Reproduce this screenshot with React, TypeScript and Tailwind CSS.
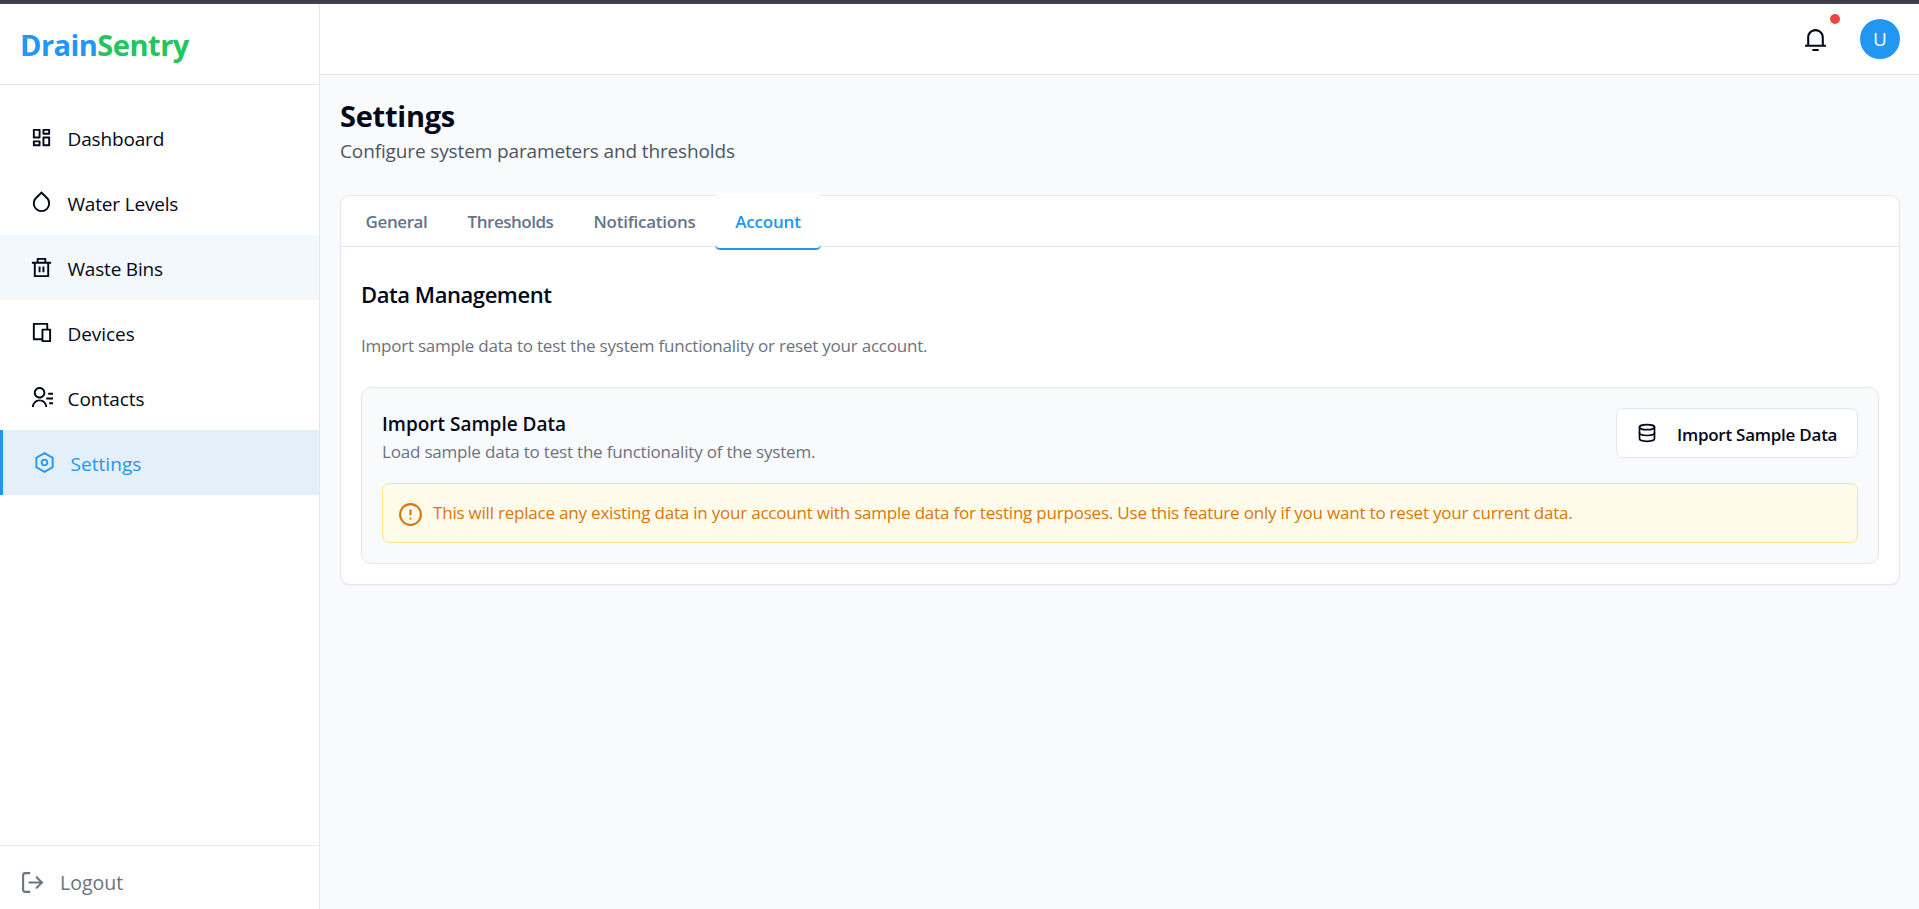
import type { ComponentType } from "react";
import { CircleAlert, Database, LogOut } from "lucide-react";
import {
  RiContactsLine,
  RiDashboardLine,
  RiDeleteBinLine,
  RiDeviceLine,
  RiDropLine,
  RiNotification3Line,
  RiSettingsLine,
} from "react-icons/ri";

type NavItem = {
  label: string;
  icon: ComponentType<{ className?: string }>;
  tracking: string;
  state?: "hover" | "active";
};

const navItems: NavItem[] = [
  { label: "Dashboard", icon: RiDashboardLine, tracking: "tracking-[-0.15px]" },
  { label: "Water Levels", icon: RiDropLine, tracking: "tracking-[-0.18px]" },
  { label: "Waste Bins", icon: RiDeleteBinLine, tracking: "tracking-[-0.2px]", state: "hover" },
  { label: "Devices", icon: RiDeviceLine, tracking: "tracking-[-0.05px]" },
  { label: "Contacts", icon: RiContactsLine, tracking: "tracking-[-0.036px]" },
  { label: "Settings", icon: RiSettingsLine, tracking: "tracking-[0.05px]", state: "active" },
];

const tabs = [
  { label: "General", style: "w-[101px] tracking-[-0.404px]" },
  { label: "Thresholds", style: "w-[126px] pl-px tracking-[-0.48px]" },
  { label: "Notifications", style: "w-[142px] pl-px tracking-[-0.249px]" },
  { label: "Account", style: "w-[106px] pt-0.5 tracking-[-0.2px]", active: true },
];

function NavLink({ label, icon: Icon, tracking, state }: NavItem) {
  const look =
    state === "active"
      ? "border-l-[3px] border-[#2196f3] bg-[#e3f0f9] text-[#2196f3]"
      : state === "hover"
        ? "bg-[#f2f8fc]"
        : "";
  return (
    <a href="#" className={`flex h-[65px] items-center gap-[14.5px] pl-[30px] ${look}`}>
      <Icon className="size-[23px]" />
      <span className={`pt-0.5 text-[19px] leading-[30px] ${tracking}`}>{label}</span>
    </a>
  );
}

function Sidebar() {
  return (
    <aside className="flex w-80 shrink-0 flex-col border-r border-[#e5e7eb] bg-white">
      <div className="flex h-[81px] items-center border-b border-[#e5e7eb] pl-5 text-[29px] font-bold">
        <h1 className="pt-0.5">
          <span className="tracking-[-0.55px] text-[#2196f3]">Drain</span>
          <span className="tracking-[-0.485px] text-[#22c55e]">Sentry</span>
        </h1>
      </div>
      <nav className="flex-1 pt-5">
        {navItems.map((item) => (
          <NavLink key={item.label} {...item} />
        ))}
      </nav>
      <div className="h-16 border-t border-[#e5e7eb] pt-5">
        <button className="flex items-center gap-[15px] pl-5 text-[19.5px] leading-[30px] text-[#6b7280]">
          <LogOut className="size-[25px]" />
          <span className="pt-0.5">Logout</span>
        </button>
      </div>
    </aside>
  );
}

function Header() {
  return (
    <header className="flex h-[71px] shrink-0 items-center justify-end border-b border-[#e5e7eb] bg-white pr-[19px]">
      <button className="relative mr-[32.5px]">
        <RiNotification3Line className="size-[25px]" />
        <span className="absolute -top-[13px] left-[27.5px] size-2.5 rounded-full bg-[#ef4444]" />
      </button>
      <div className="flex size-10 items-center justify-center rounded-full bg-[#2196f3] pt-px text-[19px] text-white">
        U
      </div>
    </header>
  );
}

function TabBar() {
  return (
    <div className="flex h-[51px] items-start border-b border-[#e2e8f0] pl-[5px]">
      {tabs.map(({ label, style, active }) => (
        <button
          key={label}
          className={`-mt-[3px] flex h-[57px] items-center justify-center rounded-[5px] text-[17px] font-semibold ${style} ${
            active ? "border-b-2 border-[#2196f3] bg-white text-[#2196f3]" : "text-[#64748b]"
          }`}
        >
          {label}
        </button>
      ))}
    </div>
  );
}

function ImportPanel() {
  return (
    <section className="rounded-[10px] border border-[#e5e7eb] bg-[#f9fafb] p-5">
      <div className="flex items-start justify-between">
        <div className="pt-px">
          <h4 className="text-[19px] leading-[30px] font-semibold">Import Sample Data</h4>
          <p className="-mb-px text-[17px] leading-[25px] tracking-[-0.197px] text-[#6b7280]">
            Load sample data to test the functionality of the system.
          </p>
        </div>
        <button className="flex h-[50px] w-[242px] items-center gap-5 rounded-[7px] border border-[#e2e8f0] bg-white pl-5">
          <Database className="size-5" />
          <span className="pt-0.5 text-[17px] leading-[25px] font-semibold tracking-[-0.25px]">
            Import Sample Data
          </span>
        </button>
      </div>
      <div className="mt-5 flex h-[60px] items-center gap-2.5 rounded-[7px] border border-[#fde68a] bg-[#fffbeb] pl-[15px] text-[#d97706]">
        <CircleAlert className="mt-[3px] size-[25px]" />
        <p className="pb-0.5 text-[17px] leading-[25px] tracking-[-0.207px]">
          This will replace any existing data in your account with sample data for testing purposes. Use this feature
          only if you want to reset your current data.
        </p>
      </div>
    </section>
  );
}

export default function App() {
  return (
    <div className="flex h-[909px] flex-col overflow-hidden font-['Open_Sans','Noto_Sans',sans-serif] text-[#020817]">
      <div className="h-1 shrink-0 border-b-2 border-[#46444b] bg-[#3b3d49]" />
      <div className="flex min-h-0 flex-1">
        <Sidebar />
        <div className="flex min-w-0 flex-1 flex-col">
          <Header />
          <main className="flex-1 bg-[#f9fafc] px-5 pt-[21px]">
            <div className="mb-[29px]">
              <h2 className="text-[29px] leading-10 font-bold tracking-[-0.25px]">Settings</h2>
              <p className="text-[19px] leading-[30px] tracking-[-0.13px] text-[#4b5563]">
                Configure system parameters and thresholds
              </p>
            </div>
            <div className="mr-[-1px] rounded-[10px] border border-[#e2e8f0] bg-white shadow-[0_1px_2px_rgba(0,0,0,0.05)]">
              <TabBar />
              <div className="px-5 pt-[30px] pb-5">
                <h3 className="mb-[21px] text-[22px] leading-[35px] font-semibold tracking-[-0.44px]">
                  Data Management
                </h3>
                <p className="mb-[29px] text-[17px] leading-[25px] tracking-[-0.225px] text-[#6b7280]">
                  Import sample data to test the system functionality or reset your account.
                </p>
                <ImportPanel />
              </div>
            </div>
          </main>
        </div>
      </div>
    </div>
  );
}
